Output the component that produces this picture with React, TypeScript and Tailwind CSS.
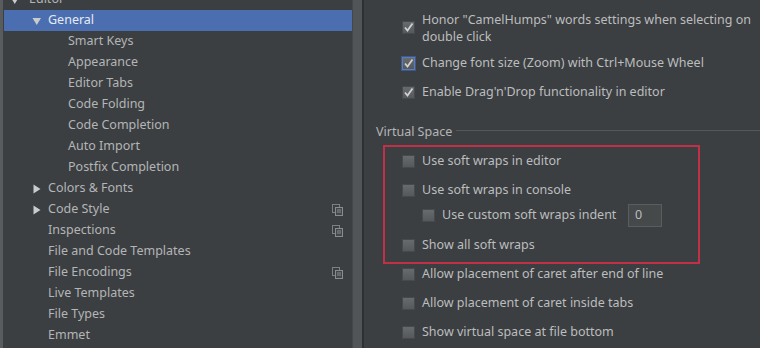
import React from 'react';

const FONT = { fontFamily: '"Noto Sans", "Open Sans", sans-serif' };

type TreeRow = { label: string; depth: 0 | 1 | 2; arrow?: 'down' | 'right'; selected?: boolean; icon?: boolean };

const treeRows: TreeRow[] = [
  { label: 'Editor', depth: 0, arrow: 'down' },
  { label: 'General', depth: 1, arrow: 'down', selected: true },
  { label: 'Smart Keys', depth: 2 },
  { label: 'Appearance', depth: 2 },
  { label: 'Editor Tabs', depth: 2 },
  { label: 'Code Folding', depth: 2 },
  { label: 'Code Completion', depth: 2 },
  { label: 'Auto Import', depth: 2 },
  { label: 'Postfix Completion', depth: 2 },
  { label: 'Colors & Fonts', depth: 1, arrow: 'right' },
  { label: 'Code Style', depth: 1, arrow: 'right', icon: true },
  { label: 'Inspections', depth: 1, icon: true },
  { label: 'File and Code Templates', depth: 1 },
  { label: 'File Encodings', depth: 1, icon: true },
  { label: 'Live Templates', depth: 1 },
  { label: 'File Types', depth: 1 },
  { label: 'Emmet', depth: 1 },
];

function Arrow({ dir }: { dir: 'down' | 'right' }) {
  return (
    <svg width="10" height="10" viewBox="0 0 10 10" className="shrink-0">
      {dir === 'down' ? (
        <polygon points="0.5,2 9,2 4.75,9" fill="#c9ccce" />
      ) : (
        <polygon points="1.5,0.5 8.5,5 1.5,9.5" fill="#c9ccce" />
      )}
    </svg>
  );
}

function ProjectIcon() {
  return (
    <svg width="11" height="12" viewBox="0 0 11 12" className="shrink-0">
      <rect x="0.5" y="0.5" width="7" height="8" fill="none" stroke="#7d8082" />
      <rect x="3.5" y="3.5" width="7" height="8" fill="#45484a" stroke="#8a8d8f" />
      <line x1="5" y1="6" x2="9" y2="6" stroke="#8a8d8f" />
      <line x1="5" y1="8" x2="9" y2="8" stroke="#8a8d8f" />
    </svg>
  );
}

function Checkbox({ checked, focused }: { checked?: boolean; focused?: boolean }) {
  return (
    <div
      className={`relative w-[13px] h-[13px] shrink-0 bg-gradient-to-b from-[#686b6d] to-[#56595b] border ${
        focused ? 'border-[#5b7cb8] shadow-[0_0_0_1px_#3d5a8f]' : 'border-[#47494b]'
      }`}
    >
      {checked && (
        <svg width="13" height="13" viewBox="0 0 13 13" className="absolute -left-px -top-px">
          <polyline points="3,6.5 5.5,9.5 10.5,2.5" fill="none" stroke="#cfd0d1" strokeWidth="1.8" />
        </svg>
      )}
    </div>
  );
}

export default function App() {
  return (
    <div className="flex w-[760px] h-[348px] overflow-hidden bg-[#3c3f41] text-[12.5px]" style={FONT}>
      {/* Settings tree */}
      <div className="w-[352px] h-full border-l-[3px] border-[#595c5e] overflow-hidden">
        <div className="-mt-[11px] pl-px">
          {treeRows.map((row) => (
            <div
              key={row.label}
              className={`flex items-center h-[21px] pr-[9px] ${row.selected ? 'bg-[#4a6eb0] text-[#e6ebf3]' : 'text-[#b3b5b7]'}`}
            >
              <div
                className={`flex items-center ${
                  row.depth === 0 ? 'pl-[6px] w-[25px]' : row.depth === 1 ? 'pl-[28px] w-[44px]' : 'w-[64px]'
                }`}
              >
                {row.arrow && <Arrow dir={row.arrow} />}
              </div>
              <span className="flex-1 leading-none">{row.label}</span>
              {row.icon && <ProjectIcon />}
            </div>
          ))}
        </div>
      </div>

      {/* Splitter */}
      <div className="w-px h-full bg-[#45484a]" />
      <div className="w-[9px] h-full bg-[#525557]" />
      <div className="w-[2px] h-full bg-[#2e3032]" />

      {/* Editor > General options */}
      <div className="flex-1 h-full text-[#bbbdbf]">
        <div className="pl-[38px] pt-[6px]">
          <div className="flex items-center gap-[7px] h-[43px]">
            <Checkbox checked />
            <span className="leading-[17px]">
              Honor "CamelHumps" words settings when selecting on
              <br />
              double click
            </span>
          </div>
          <div className="flex items-center gap-[7px] h-[29px]">
            <Checkbox checked focused />
            <span>Change font size (Zoom) with Ctrl+Mouse Wheel</span>
          </div>
          <div className="flex items-center gap-[7px] h-[29px]">
            <Checkbox checked />
            <span>Enable Drag'n'Drop functionality in editor</span>
          </div>
        </div>

        <div className="flex items-center gap-[4px] pl-[12px] mt-[17px] h-[16px]">
          <span className="text-[#b3b5b7]">Virtual Space</span>
          <div className="flex-1 h-px bg-[#55585a] -mt-[3px]" />
        </div>

        <div className="ml-[19px] mt-[5px] w-[317px] border-2 border-[#c23048] pl-[17px] pb-[2px]">
          <div className="flex items-center gap-[7px] h-[29px]">
            <Checkbox />
            <span>Use soft wraps in editor</span>
          </div>
          <div className="flex items-center gap-[7px] h-[28px]">
            <Checkbox />
            <span>Use soft wraps in console</span>
          </div>
          <div className="flex items-center h-[23px] pl-[20px]">
            <Checkbox />
            <span className="ml-[7px] w-[186px]">Use custom soft wraps indent</span>
            <div className="w-[34px] h-[23px] border border-[#5a5d5f] bg-[#45494a] pl-[6px] flex items-center">0</div>
          </div>
          <div className="flex items-center gap-[7px] h-[30px] mt-[3px]">
            <Checkbox />
            <span>Show all soft wraps</span>
          </div>
        </div>

        <div className="pl-[38px]">
          <div className="flex items-center gap-[7px] h-[21px]">
            <Checkbox />
            <span>Allow placement of caret after end of line</span>
          </div>
          <div className="flex items-center gap-[7px] h-[21px] mt-[8px]">
            <Checkbox />
            <span>Allow placement of caret inside tabs</span>
          </div>
          <div className="flex items-center gap-[7px] h-[21px] mt-[8px]">
            <Checkbox />
            <span>Show virtual space at file bottom</span>
          </div>
        </div>
      </div>
    </div>
  );
}
